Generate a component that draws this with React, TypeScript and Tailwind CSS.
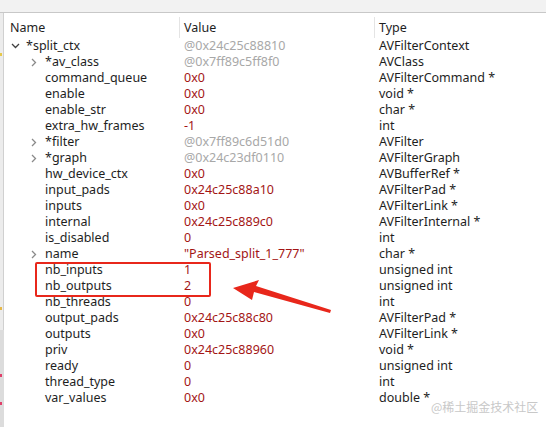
import React from "react";

type Row = { name: string; value: string; type: string; level: 0 | 1; exp?: "down" | "right"; vc: "grey" | "red" };

const rows: Row[] = [
  { name: "*split_ctx", value: "@0x24c25c88810", type: "AVFilterContext", level: 0, exp: "down", vc: "grey" },
  { name: "*av_class", value: "@0x7ff89c5ff8f0", type: "AVClass", level: 1, exp: "right", vc: "grey" },
  { name: "command_queue", value: "0x0", type: "AVFilterCommand *", level: 1, vc: "red" },
  { name: "enable", value: "0x0", type: "void *", level: 1, vc: "red" },
  { name: "enable_str", value: "0x0", type: "char *", level: 1, vc: "red" },
  { name: "extra_hw_frames", value: "-1", type: "int", level: 1, vc: "red" },
  { name: "*filter", value: "@0x7ff89c6d51d0", type: "AVFilter", level: 1, exp: "right", vc: "grey" },
  { name: "*graph", value: "@0x24c23df0110", type: "AVFilterGraph", level: 1, exp: "right", vc: "grey" },
  { name: "hw_device_ctx", value: "0x0", type: "AVBufferRef *", level: 1, vc: "red" },
  { name: "input_pads", value: "0x24c25c88a10", type: "AVFilterPad *", level: 1, vc: "red" },
  { name: "inputs", value: "0x0", type: "AVFilterLink *", level: 1, vc: "red" },
  { name: "internal", value: "0x24c25c889c0", type: "AVFilterInternal *", level: 1, vc: "red" },
  { name: "is_disabled", value: "0", type: "int", level: 1, vc: "red" },
  { name: "name", value: "\"Parsed_split_1_777\"", type: "char *", level: 1, exp: "right", vc: "red" },
  { name: "nb_inputs", value: "1", type: "unsigned int", level: 1, vc: "red" },
  { name: "nb_outputs", value: "2", type: "unsigned int", level: 1, vc: "red" },
  { name: "nb_threads", value: "0", type: "int", level: 1, vc: "red" },
  { name: "output_pads", value: "0x24c25c88c80", type: "AVFilterPad *", level: 1, vc: "red" },
  { name: "outputs", value: "0x0", type: "AVFilterLink *", level: 1, vc: "red" },
  { name: "priv", value: "0x24c25c88960", type: "void *", level: 1, vc: "red" },
  { name: "ready", value: "0", type: "unsigned int", level: 1, vc: "red" },
  { name: "thread_type", value: "0", type: "int", level: 1, vc: "red" },
  { name: "var_values", value: "0x0", type: "double *", level: 1, vc: "red" },
];

function Chevron({ dir }: { dir: "down" | "right" }) {
  if (dir === "down")
    return (
      <svg width="9" height="6" viewBox="0 0 9 6" className="block">
        <path d="M1 1 L4.5 4.5 L8 1" fill="none" stroke="#404040" strokeWidth="1.3" />
      </svg>
    );
  return (
    <svg width="6" height="9" viewBox="0 0 6 9" className="block">
      <path d="M1 1 L4.5 4.5 L1 8" fill="none" stroke="#8a8a8a" strokeWidth="1.3" />
    </svg>
  );
}

export default function App() {
  return (
    <div
      className="relative w-[546px] h-[427px] overflow-hidden bg-white text-[12.5px] text-[#1e1e1e]"
      style={{ fontFamily: '"Noto Sans", "Noto Sans CJK SC", sans-serif' }}
    >
      <div className="h-[13px] bg-[#f2f2f2] border-b border-[#c8c8c8]" />
      <div className="flex h-[414px]">
        <div className="w-[4px] bg-[#ececec] border-r border-[#d0d0d0] relative shrink-0">
          <div className="absolute left-0 top-[40px] w-[2px] h-[3px] bg-[#e6c84a]" />
          <div className="absolute left-0 top-[294px] w-[2px] h-[3px] bg-[#e6b84a]" />
          <div className="absolute left-0 top-[317px] w-[4px] h-[97px] bg-[#dcdcdc]" />
          <div className="absolute left-0 top-[361px] w-[2px] h-[3px] bg-[#e0406a]" />
          <div className="absolute left-0 top-[389px] w-[2px] h-[3px] bg-[#e0406a]" />
        </div>
        <div className="flex-1 flex flex-col">
          <div className="flex h-[25px] items-center leading-[16px] pt-[4px]">
            <div className="w-[176px] pl-[6px] border-r border-[#e4e4e4] h-full flex items-center">Name</div>
            <div className="w-[195px] pl-[4px] border-r border-[#e4e4e4] h-full flex items-center">Value</div>
            <div className="flex-1 pl-[4px] h-full flex items-center">Type</div>
          </div>
          <div className="flex flex-col">
            {rows.map((r, i) => (
              <div key={i} className="flex h-[16px] items-center leading-[16px] whitespace-nowrap">
                <div className="w-[176px] flex items-center">
                  <div className={`flex items-center justify-center ${r.level === 0 ? "w-[21px] pl-[2px]" : "w-[40px] pl-[19px]"}`}>
                    {r.exp ? <Chevron dir={r.exp} /> : null}
                  </div>
                  <span className="pl-[1px]">{r.name}</span>
                </div>
                <div className={`w-[195px] pl-[4px] ${r.vc === "grey" ? "text-[#a8a8a8]" : "text-[#a31515]"}`}>{r.value}</div>
                <div className="flex-1 pl-[4px]">{r.type}</div>
              </div>
            ))}
          </div>
        </div>
      </div>

      {/* highlight box */}
      <div className="absolute left-[35px] top-[262px] w-[176px] h-[35px] border-2 border-[#e8271b] rounded-[2px]" />

      {/* arrow */}
      <svg className="absolute left-0 top-0" width="546" height="427" viewBox="0 0 546 427">
        <path d="M233 288 L259 280 L256 286 L331 310 L330 313 L254 292 L252 300 Z" fill="#e8271b" />
      </svg>

      <div
        className="absolute left-[431px] top-[399px] whitespace-nowrap text-[12px] leading-[16px] text-[#c8c8c8]"
        style={{ fontFamily: '"Noto Sans CJK SC", sans-serif' }}
      >
        @稀土掘金技术社区
      </div>
    </div>
  );
}
